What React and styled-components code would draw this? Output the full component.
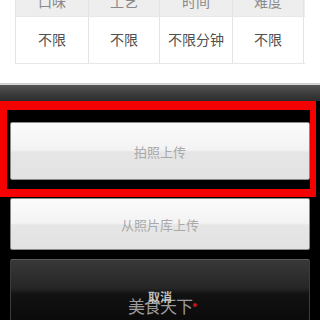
import React from 'react'
import styled, { createGlobalStyle } from 'styled-components'

const Global = createGlobalStyle`
  html, body { margin: 0; padding: 0; background: #fff; }
  body { font-family: "Noto Sans CJK SC", "Noto Sans", sans-serif; }
`

const heads = ['口味', '工艺', '时间', '难度']
const values = ['不限', '不限', '不限分钟', '不限']
const widths = [73, 71, 73, 71]

const App = () => {
  return (
    <Page>
      <Global />
      <Content>
        <Table>
          <Row head>
            {heads.map((h, i) => <Cell key={h} head w={widths[i]}>{h}</Cell>)}
          </Row>
          <Row>
            {values.map((v, i) => <Cell key={i} w={widths[i]}>{v}</Cell>)}
          </Row>
        </Table>
      </Content>
      <Divider />
      <Sheet>
        <SheetTop />
        <SheetButton h={58} mt={21}>拍照上传</SheetButton>
        <SheetButton h={52} mt={18}>从照片库上传</SheetButton>
        <CancelButton>取消</CancelButton>
      </Sheet>
      <RedFrame />
      <Watermark>美食天下<Dot /></Watermark>
    </Page>
  )
}

export default App

const Page = styled.div`
  position: relative;
  width: 320px;
  height: 320px;
  overflow: hidden;
  background: #fff;
`
const Content = styled.div`
  display: flow-root;
  height: 83px;
  padding: 0 15px;
  box-sizing: border-box;
  background: #fff;
`
const Table = styled.div`
  margin-top: -14px;
  width: 289px;
  border-left: 1px solid #e4e4e4;
`
const Row = styled.div`
  display: flex;
  height: ${({ head }) => (head ? '30px' : '46px')};
  background: ${({ head }) => (head ? '#eeeeee' : '#fff')};
  border-bottom: 1px solid #e8e8e8;
`
const Cell = styled.div`
  width: ${({ w }) => w}px;
  flex: none;
  display: flex;
  align-items: center;
  justify-content: center;
  border-right: 1px solid #e4e4e4;
  font-size: 14px;
  color: ${({ head }) => (head ? '#8a8a8a' : '#505050')};
  padding-bottom: ${({ head }) => (head ? '0' : '2px')};
  box-sizing: border-box;
`
const Divider = styled.div`
  height: 2px;
  background: linear-gradient(#c9c9c9, #dedede);
`
const Sheet = styled.div`
  height: 235px;
  background: #000;
  display: flex;
  flex-direction: column;
  align-items: center;
`
const SheetTop = styled.div`
  align-self: stretch;
  height: 16px;
  flex: none;
  background: linear-gradient(#545454, #3a3a3a 60%, #2c2c2c);
`
const SheetButton = styled.div`
  flex: none;
  width: 300px;
  height: ${({ h }) => h}px;
  margin-top: ${({ mt }) => mt}px;
  box-sizing: border-box;
  border: 1px solid #8a8a8a;
  border-radius: 2px;
  background: linear-gradient(#fbfbfb 0%, #f3f3f3 48%, #e6e6e6 52%, #e2e2e2 100%);
  display: flex;
  align-items: center;
  justify-content: center;
  font-size: 13px;
  color: #a9a9a9;
`
const CancelButton = styled.div`
  flex: none;
  width: 300px;
  height: 64px;
  margin-top: 9px;
  box-sizing: border-box;
  border: 1px solid #3c3c3c;
  border-top-color: #5a5a5a;
  border-radius: 2px;
  background: linear-gradient(#383838 0%, #262626 45%, #121212 55%, #0a0a0a 100%);
  text-align: center;
  padding-top: 30px;
  font-size: 12px;
  font-weight: bold;
  color: #bdbdbd;
  line-height: 14px;
`
const RedFrame = styled.div`
  position: absolute;
  left: 0;
  top: 101px;
  width: 316px;
  height: 96px;
  box-sizing: border-box;
  border-style: solid;
  border-color: #f40202;
  border-width: 9px 6px 8px 7px;
`
const Watermark = styled.div`
  position: absolute;
  left: 128px;
  top: 296px;
  font-size: 17px;
  line-height: 19px;
  color: rgba(220, 220, 220, 0.7);
  letter-spacing: -1px;
  display: flex;
  align-items: flex-end;
`
const Dot = styled.span`
  width: 4px;
  height: 4px;
  border-radius: 50%;
  background: #c81010;
  margin: 0 0 8px 1px;
`
